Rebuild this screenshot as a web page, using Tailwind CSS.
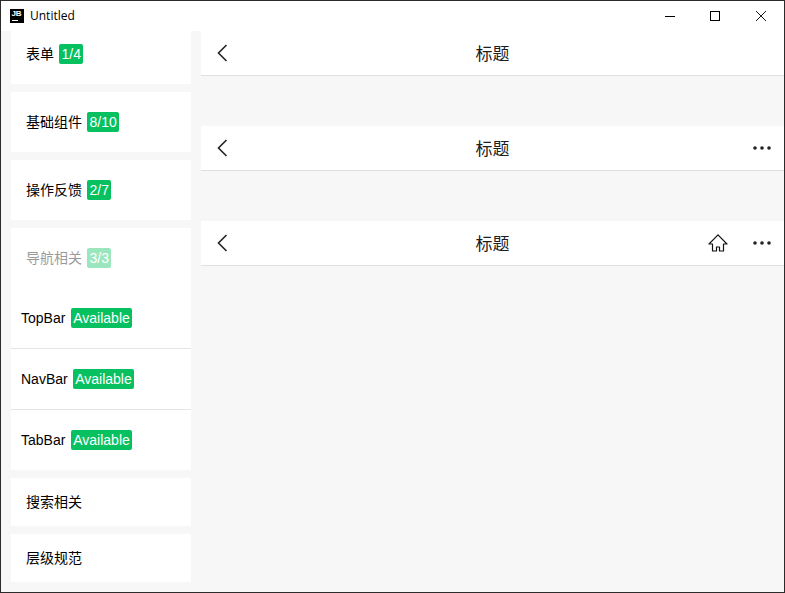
<!DOCTYPE html>
<html lang="zh-CN">
<head>
  <meta charset="UTF-8">
  <title>Untitled</title>
  <script src="https://cdn.jsdelivr.net/npm/@tailwindcss/browser@4"></script>
</head>
<body class="bg-[#f7f7f7]">
  <div class="w-[785px] h-[593px] flex flex-col border border-[#2b2b2b] bg-[#f7f7f7] overflow-hidden [font-family:'Liberation_Sans','Noto_Sans_CJK_SC',sans-serif] text-sm text-black">
    <!-- title bar -->
    <header class="h-[30px] shrink-0 bg-white flex items-center">
      <div class="ml-[9px] w-[14px] h-[14px] bg-black text-white flex flex-col items-center leading-none overflow-hidden">
        <span class="text-[8px] font-bold leading-[9px] -ml-px">JB</span>
        <span class="self-start ml-[2px] mt-[2px] w-[6px] h-px bg-white"></span>
      </div>
      <span class="ml-[6px] text-xs text-black [font-family:'Open_Sans',sans-serif]">Untitled</span>
      <div class="ml-auto flex items-center text-black">
        <svg class="w-[10px] h-[10px]" viewBox="0 0 10 10"><path d="M0 5.5h10" stroke="currentColor" fill="none"/></svg>
        <svg class="ml-[35px] w-[10px] h-[10px]" viewBox="0 0 10 10"><rect x=".5" y=".5" width="9" height="9" stroke="currentColor" fill="none"/></svg>
        <svg class="ml-[36px] mr-[18px] w-[10px] h-[10px]" viewBox="0 0 10 10"><path d="M0 0l10 10M10 0L0 10" stroke="currentColor" stroke-width=".9" fill="none"/></svg>
      </div>
    </header>

    <div class="flex-1 flex min-h-0">
      <!-- sidebar -->
      <aside class="ml-[10px] w-[180px] shrink-0 flex flex-col gap-2 overflow-hidden">
        <div class="-mt-[7px] h-[60px] shrink-0 bg-white flex items-center pl-[15px]">
          <span>表单</span>
          <span class="ml-[5px] h-5 px-[2.5px] rounded-[2px] bg-[#07c160] text-white leading-5">1/4</span>
        </div>
        <div class="h-[60px] shrink-0 bg-white flex items-center pl-[15px]">
          <span>基础组件</span>
          <span class="ml-[5px] h-5 px-[2.5px] rounded-[2px] bg-[#07c160] text-white leading-5">8/10</span>
        </div>
        <div class="h-[60px] shrink-0 bg-white flex items-center pl-[15px]">
          <span>操作反馈</span>
          <span class="ml-[5px] h-5 px-[2.5px] rounded-[2px] bg-[#07c160] text-white leading-5">2/7</span>
        </div>
        <div class="shrink-0 bg-white flex flex-col">
          <div class="h-[60px] flex items-center pl-[15px] opacity-40">
            <span>导航相关</span>
            <span class="ml-[5px] h-5 px-[2.5px] rounded-[2px] bg-[#07c160] text-white leading-5">3/3</span>
          </div>
          <div class="h-[60px] flex items-center pl-[10px]">
            <span class="w-[45px]">TopBar</span>
            <span class="ml-[5px] w-[61px] h-5 text-center rounded-[2px] bg-[#07c160] text-white leading-5">Available</span>
          </div>
          <div class="h-[61px] flex items-center pl-[10px] border-t border-[#e5e5e5]">
            <span>NavBar</span>
            <span class="ml-[5px] h-5 px-[2.5px] rounded-[2px] bg-[#07c160] text-white leading-5">Available</span>
          </div>
          <div class="h-[61px] flex items-center pl-[10px] border-t border-[#e5e5e5]">
            <span class="w-[45px]">TabBar</span>
            <span class="ml-[5px] w-[61px] h-5 text-center rounded-[2px] bg-[#07c160] text-white leading-5">Available</span>
          </div>
        </div>
        <div class="h-12 shrink-0 bg-white flex items-center pl-[15px]">搜索相关</div>
        <div class="h-12 shrink-0 bg-white flex items-center pl-[15px]">层级规范</div>
      </aside>

      <!-- nav bars -->
      <main class="ml-[10px] flex-1 flex flex-col gap-[50px]">
        <div class="h-[45px] shrink-0 bg-white border-b border-[#e0e0e0] grid grid-cols-[1fr_auto_1fr] items-center">
          <svg class="ml-[16px] w-[11px] h-[18px]" viewBox="0 0 11 18"><path d="M9.5 1L1.5 9l8 8" stroke="#222" stroke-width="1.6" fill="none"/></svg>
          <span class="mt-[4px] text-[17px] text-black/90">标题</span>
          <span></span>
        </div>
        <div class="h-[45px] shrink-0 bg-white border-b border-[#e0e0e0] grid grid-cols-[1fr_auto_1fr] items-center">
          <svg class="ml-[16px] w-[11px] h-[18px]" viewBox="0 0 11 18"><path d="M9.5 1L1.5 9l8 8" stroke="#222" stroke-width="1.6" fill="none"/></svg>
          <span class="mt-[4px] text-[17px] text-black/90">标题</span>
          <div class="flex justify-end pr-[12px]">
            <svg class="w-[20px] h-[6px]" viewBox="0 0 20 6"><circle cx="3" cy="3" r="1.8" fill="#222"/><circle cx="10" cy="3" r="1.8" fill="#222"/><circle cx="17" cy="3" r="1.8" fill="#222"/></svg>
          </div>
        </div>
        <div class="h-[45px] shrink-0 bg-white border-b border-[#e0e0e0] grid grid-cols-[1fr_auto_1fr] items-center">
          <svg class="ml-[16px] w-[11px] h-[18px]" viewBox="0 0 11 18"><path d="M9.5 1L1.5 9l8 8" stroke="#222" stroke-width="1.6" fill="none"/></svg>
          <span class="mt-[4px] text-[17px] text-black/90">标题</span>
          <div class="flex justify-end items-center pr-[12px]">
            <svg class="w-[20px] h-[18px]" viewBox="0 0 20 18"><path d="M10 .8L1 10h3.5v7H8.5v-4h3v4h4v-7H19z" stroke="#111" stroke-width="1.2" fill="none" stroke-linejoin="round"/></svg>
            <svg class="ml-[24px] w-[20px] h-[6px]" viewBox="0 0 20 6"><circle cx="3" cy="3" r="1.8" fill="#222"/><circle cx="10" cy="3" r="1.8" fill="#222"/><circle cx="17" cy="3" r="1.8" fill="#222"/></svg>
          </div>
        </div>
      </main>
    </div>
  </div>
</body>
</html>
